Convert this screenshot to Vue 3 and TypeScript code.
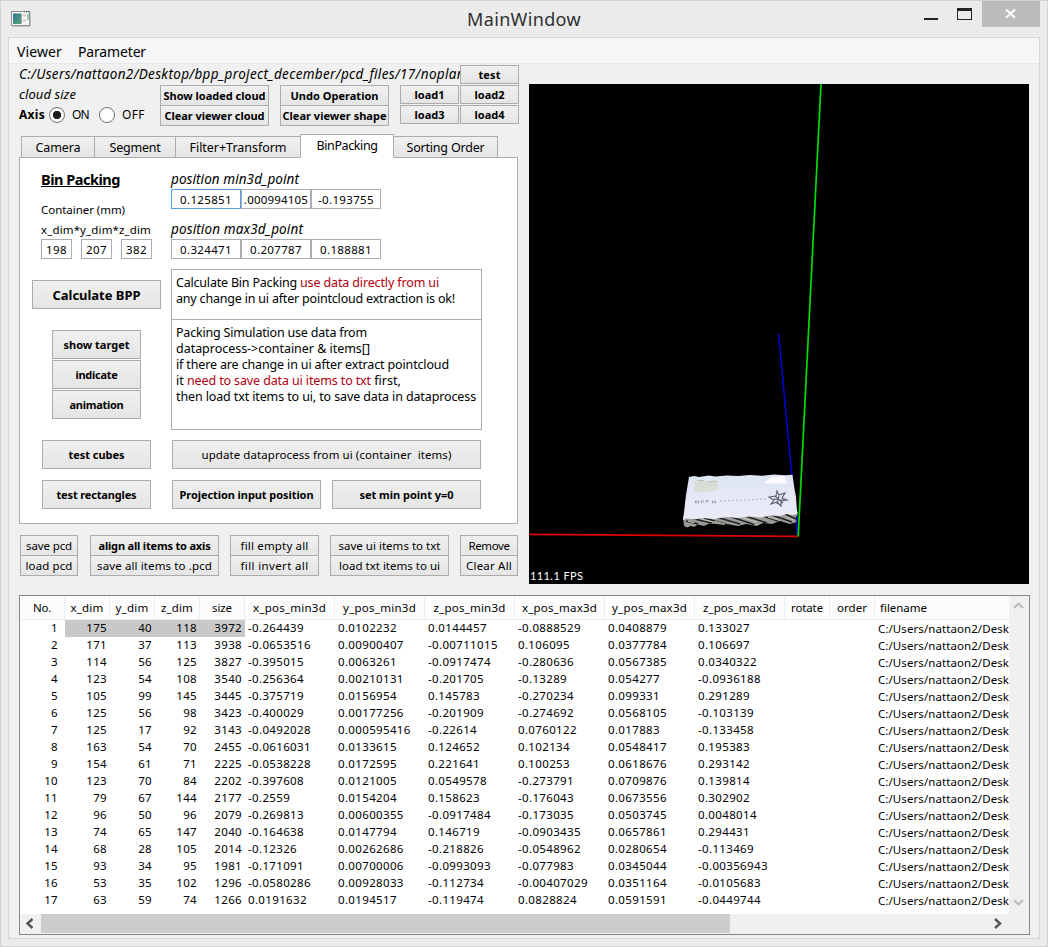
<script setup lang="ts">
import type { Directive } from 'vue'

// Spreads a label's letters so that it occupies the given width in pixels.
const vFit: Directive<HTMLElement, number> = {
  mounted(el, binding) {
    const count = (el.textContent ?? '').length
    const natural = el.getBoundingClientRect().width
    if (count > 0) el.style.letterSpacing = `${(binding.value - natural) / count}px`
  },
}

interface Btn { label: string; w: number; bold?: boolean }

const tabs = [
  { label: 'Camera', size: 'camera', w: 45 },
  { label: 'Segment', size: 'segment', w: 51 },
  { label: 'Filter+Transform', size: 'filter', w: 97 },
  { label: 'BinPacking', size: 'bin', w: 61 },
  { label: 'Sorting Order', size: 'sorting', w: 78 },
]

const updateLabel = 'update dataprocess from ui (container  items)'

const itemButtons: { size: string; items: Btn[] }[] = [
  { size: 'g1', items: [{ label: 'save pcd', w: 46 }, { label: 'load pcd', w: 47 }] },
  { size: 'g2', items: [{ label: 'align all items to axis', w: 112, bold: true }, { label: 'save all items to .pcd', w: 115 }] },
  { size: 'g3', items: [{ label: 'fill empty all', w: 68 }, { label: 'fill invert all', w: 68 }] },
  { size: 'g4', items: [{ label: 'save ui items to txt', w: 102 }, { label: 'load txt items to ui', w: 101 }] },
  { size: 'g5', items: [{ label: 'Remove', w: 41 }, { label: 'Clear All', w: 46 }] },
]

const columns = [
  { label: 'No.', w: 18 }, { label: 'x_dim', w: 33 }, { label: 'y_dim', w: 33 }, { label: 'z_dim', w: 32 },
  { label: 'size', w: 20 }, { label: 'x_pos_min3d', w: 73 }, { label: 'y_pos_min3d', w: 73 },
  { label: 'z_pos_min3d', w: 72 }, { label: 'x_pos_max3d', w: 75 }, { label: 'y_pos_max3d', w: 75 },
  { label: 'z_pos_max3d', w: 73 }, { label: 'rotate', w: 32 }, { label: 'order', w: 30 }, { label: 'filename', w: 47 },
]

const rows: string[][] = [
  '175 40 118 3972 -0.264439 0.0102232 0.0144457 -0.0888529 0.0408879 0.133027',
  '171 37 113 3938 -0.0653516 0.00900407 -0.00711015 0.106095 0.0377784 0.106697',
  '114 56 125 3827 -0.395015 0.0063261 -0.0917474 -0.280636 0.0567385 0.0340322',
  '123 54 108 3540 -0.256364 0.00210131 -0.201705 -0.13289 0.054277 -0.0936188',
  '105 99 145 3445 -0.375719 0.0156954 0.145783 -0.270234 0.099331 0.291289',
  '125 56 98 3423 -0.400029 0.00177256 -0.201909 -0.274692 0.0568105 -0.103139',
  '125 17 92 3143 -0.0492028 0.000595416 -0.22614 0.0760122 0.017883 -0.133458',
  '163 54 70 2455 -0.0616031 0.0133615 0.124652 0.102134 0.0548417 0.195383',
  '154 61 71 2225 -0.0538228 0.0172595 0.221641 0.100253 0.0618676 0.293142',
  '123 70 84 2202 -0.397608 0.0121005 0.0549578 -0.273791 0.0709876 0.139814',
  '79 67 144 2177 -0.2559 0.0154204 0.158623 -0.176043 0.0673556 0.302902',
  '96 50 96 2079 -0.269813 0.00600355 -0.0917484 -0.173035 0.0503745 0.0048014',
  '74 65 147 2040 -0.164638 0.0147794 0.146719 -0.0903435 0.0657861 0.294431',
  '68 28 105 2014 -0.12326 0.00262686 -0.218826 -0.0548962 0.0280654 -0.113469',
  '93 34 95 1981 -0.171091 0.00700006 -0.0993093 -0.077983 0.0345044 -0.00356943',
  '53 35 102 1296 -0.0580286 0.00928033 -0.112734 -0.00407029 0.0351164 -0.0105683',
  '63 59 74 1266 0.0191632 0.0194517 -0.119474 0.0828824 0.0591591 -0.0449744',
].map((line) => line.split(' '))
</script>

<template>
  <div class="window">
    <header class="titlebar">
      <svg class="app-icon" width="20" height="16" viewBox="0 0 20 16">
        <defs>
          <linearGradient id="ico" x1="0" y1="0" x2="1" y2="1">
            <stop offset="0" stop-color="#39709a" /><stop offset="1" stop-color="#4fa871" />
          </linearGradient>
        </defs>
        <rect x=".5" y=".5" width="18" height="14" fill="#f5f5f5" stroke="#8d9194" />
        <path d="M1 15h18V1" fill="none" stroke="#999" />
        <rect x="2" y="2.5" width="8" height="10.5" fill="url(#ico)" />
        <path d="M10.5 2.5V13" stroke="#a5adb5" />
        <path d="M12 4.5h3M12 9.5h3" stroke="#c9c9c9" stroke-width="2" />
        <path d="M17 3v6" stroke="#4d9b83" />
        <path d="M13 .8h5" stroke="#3f5b7a" stroke-dasharray="1 1" />
      </svg>
      <h1 class="title"><span v-fit="114">MainWindow</span></h1>
      <svg class="controls" width="116" height="26" viewBox="0 0 116 26">
        <rect x="58" y="0" width="58" height="26" fill="#bcbcbc" />
        <rect x="0" y="17" width="14" height="2" fill="#222" />
        <path d="M33 7h15v12H33zM34 10v8h13v-8z" fill="#222" fill-rule="evenodd" />
        <path d="M82 8.5l9 8.2M91 8.5l-9 8.2" stroke="#fff" stroke-width="2" />
      </svg>
    </header>

    <div class="client">
      <nav class="menubar">
        <span class="menu-viewer"><span v-fit="45">Viewer</span></span>
        <span><span v-fit="68">Parameter</span></span>
      </nav>

      <main class="upper">
        <section class="left">
          <div class="path-row">
            <div class="path"><span v-fit="446">C:/Users/nattaon2/Desktop/bpp_project_december/pcd_files/17/noplan</span></div>
            <button class="btn small bold"><span v-fit="22">test</span></button>
          </div>
          <div class="tools">
            <div class="status">
              <div class="cloud"><span v-fit="57">cloud size</span></div>
              <div class="axis">
                <b><span v-fit="26">Axis</span></b>
                <i class="radio on"></i><span class="opt"><span v-fit="17">ON</span></span>
                <i class="radio"></i><span class="opt"><span v-fit="23">OFF</span></span>
              </div>
            </div>
            <div class="pair">
              <button class="btn bold"><span v-fit="102">Show loaded cloud</span></button>
              <button class="btn bold"><span v-fit="100">Clear viewer cloud</span></button>
            </div>
            <div class="pair">
              <button class="btn bold"><span v-fit="88">Undo Operation</span></button>
              <button class="btn bold"><span v-fit="104">Clear viewer shape</span></button>
            </div>
            <div class="loads">
              <button v-for="n in 4" :key="n" class="btn small bold"><span v-fit="30">load{{ n }}</span></button>
            </div>
          </div>

          <div class="tabs">
            <div v-for="t in tabs" :key="t.label" class="tab" :class="t.size"><span v-fit="t.w">{{ t.label }}</span></div>
          </div>
          <div class="panel">
            <div class="col-a">
              <h2 class="heading"><span v-fit="79">Bin Packing</span></h2>
              <div class="label"><span v-fit="84">Container (mm)</span></div>
              <div class="label"><span v-fit="110">x_dim*y_dim*z_dim</span></div>
              <div class="dims">
                <div class="field">198</div><div class="field">207</div><div class="field">382</div>
              </div>
              <button class="btn calc bold"><span v-fit="88">Calculate BPP</span></button>
              <div class="stack">
                <button class="btn bold"><span v-fit="66">show target</span></button>
                <button class="btn bold"><span v-fit="42">indicate</span></button>
                <button class="btn bold"><span v-fit="54">animation</span></button>
              </div>
              <div class="tests">
                <button class="btn bold"><span v-fit="56">test cubes</span></button>
                <button class="btn bold"><span v-fit="80">test rectangles</span></button>
              </div>
            </div>
            <div class="col-b">
              <div class="pos"><span v-fit="128">position min3d_point</span></div>
              <div class="points">
                <div class="field focus">0.125851</div>
                <div class="field tight">.000994105</div>
                <div class="field">-0.193755</div>
              </div>
              <div class="pos second"><span v-fit="132">position max3d_point</span></div>
              <div class="points">
                <div class="field">0.324471</div><div class="field">0.207787</div><div class="field">0.188881</div>
              </div>
              <div class="note first">
                <p><span v-fit="124">Calculate Bin Packing </span><em v-fit="139">use data directly from ui</em></p>
                <p><span v-fit="279">any change in ui after pointcloud extraction is ok!</span></p>
              </div>
              <div class="note">
                <p><span v-fit="191">Packing Simulation use data from</span></p>
                <p><span v-fit="194">dataprocess-&gt;container &amp; items[]</span></p>
                <p><span v-fit="273">if there are change in ui after extract pointcloud</span></p>
                <p><span v-fit="11">it </span><em v-fit="184">need to save data ui items to txt</em><span v-fit="30"> first,</span></p>
                <p><span v-fit="300">then load txt items to ui, to save data in dataprocess</span></p>
              </div>
              <button class="btn update"><span v-fit="250">{{ updateLabel }}</span></button>
              <div class="duo">
                <button class="btn bold"><span v-fit="134">Projection input position</span></button>
                <button class="btn bold"><span v-fit="94">set min point y=0</span></button>
              </div>
            </div>
          </div>

          <div class="item-buttons">
            <div v-for="g in itemButtons" :key="g.size" class="pair" :class="g.size">
              <button v-for="b in g.items" :key="b.label" class="btn" :class="{ bold: b.bold }"><span v-fit="b.w">{{ b.label }}</span></button>
            </div>
          </div>
        </section>

        <svg class="viewer" width="500" height="500" viewBox="529 84 500 500">
          <defs>
            <linearGradient id="paper" x1="0" y1="0" x2="0" y2="1">
              <stop offset="0" stop-color="#dfe5f3" /><stop offset="1" stop-color="#ebebf8" />
            </linearGradient>
          </defs>
          <rect x="529" y="84" width="500" height="500" fill="#000" />
          <path d="M778.5 334L797.5 535" stroke="#0000d0" stroke-width="1.6" />
          <path d="M683 516L684 526 687 527.500 691 526 694 527 698 524.500 704 526 709 523.500 716 524 724 525 727 524 738 526 746 524 757 526 763 523 772 524 780 521 790 524 797 522 797.500 512z" fill="#9a9b96" />
          <path d="M686 521l12 3M690 518l22 5M704 518l22 6M716 517l24 7M730 516.500l24 8M745 516l22 7M760 515l18 6M772 515l20 7M784 513.500l13 6" stroke="#20221f" stroke-width="1.5" />
          <path d="M688 521l6 2M701 519l12 3M714 521l11 3M742 518l15 4M768 517l10 3M786 517l8 3" stroke="#c8c7be" stroke-width="1" />
          <path d="M689 477L694 476 699 477 709 475.500 715 476.500 727 475.500 738 476 750 475 762 475.800 774 474.500 785 475.300 792.500 474.800 793.500 482 794.500 489 796 497 796.500 505 797.500 514 792 515 787 514 780 516 770 515.500 761 517.500 750 516.500 738 518 726 517 714 519 703 518 694 519.500 687 518.500 683 520 684.500 508 686 495z" fill="url(#paper)" />
          <path d="M695 481.500l23-.8.500 9-16 2.500-9-1z" fill="#d3dccf" opacity=".85" />
          <path d="M763 483l9-6 14-1-1 3 3 4-12 1z" fill="#fafaff" />
          <path d="M697 480.500h7M708 482l8-1" stroke="#c2c1aa" stroke-width="1" />
          <path d="M695 502h4M701 502l3-1M706 501h3M712 502h4" stroke="#9a9ca8" stroke-width="2.4" stroke-dasharray="1.5 1" />
          <path d="M720 501l47-2" stroke="#babcc8" stroke-width="1.2" stroke-dasharray="2 2" />
          <path d="M777 491l2 4 6-2-3 5 5 2-6 1 0 5-4-4-6 2 3-4-5-3 7-1zM774 499l10 1M779 496l-2 8M775 496l8 7" fill="none" stroke="#5a5e69" stroke-width="1.100" />
          <path d="M796.700 516L797.500 535" stroke="#0000b8" stroke-width="1.4" />
          <path d="M529 534.300L798 536.400" stroke="#df0000" stroke-width="1.7" />
          <path d="M821 84L798.200 536.500" stroke="#00dc00" stroke-width="1.7" />
          <text x="530" y="580" class="fps" textLength="53">111.1 FPS</text>
        </svg>
      </main>

      <section class="table">
        <div class="table-body">
          <div class="grid head">
            <div v-for="c in columns" :key="c.label" class="th"><span v-fit="c.w">{{ c.label }}</span></div>
          </div>
          <div v-for="(row, i) in rows" :key="i" class="grid tr" :class="{ selected: i === 0 }">
            <div class="td no">{{ i + 1 }}</div>
            <div v-for="(cell, j) in row" :key="j" class="td" :class="{ int: j < 4 }">{{ cell }}</div>
            <div class="td"></div>
            <div class="td"></div>
            <div class="td file"><span v-fit="131">C:/Users/nattaon2/Desk</span></div>
          </div>
        </div>
        <div class="vbar">
          <svg width="19" height="318" viewBox="0 0 19 318">
            <path d="M5 12l4.500-4.500L14 12" fill="none" stroke="#bdbdbd" stroke-width="2.2" />
            <path d="M5 304l4.500 4.500L14 304" fill="none" stroke="#bdbdbd" stroke-width="2.2" />
          </svg>
        </div>
        <div class="hbar">
          <svg width="21" height="19" viewBox="0 0 21 19"><path d="M12.500 5l-5 4.500 5 4.500" fill="none" stroke="#555" stroke-width="2.4" /></svg>
          <div class="thumb"></div>
          <svg class="right-arrow" width="21" height="19" viewBox="0 0 21 19"><path d="M7 5l5 4.500-5 4.500" fill="none" stroke="#555" stroke-width="2.4" /></svg>
        </div>
      </section>
    </div>
  </div>
</template>

<style>
body { margin: 0; background: #ebebeb; }
</style>

<style scoped>
* { box-sizing: border-box; }
.window { width: 1048px; height: 947px; overflow: hidden; border: 1px solid #d2d2d2; background: #ebebeb; font: 11.5px/20px "Noto Sans", "Open Sans", sans-serif; color: #000; }
span, b, em { white-space: pre; }
em { font-style: normal; color: #b0000f; }
.titlebar { height: 36px; display: flex; align-items: flex-start; }
.app-icon { margin: 10px 0 0 10px; flex: none; }
.title { margin: 0; flex: 1; padding-left: 436px; font-size: 18px; font-weight: 400; line-height: 37px; color: #303030; }
.controls { flex: none; margin-right: 7px; }
.client { width: 1032px; height: 902px; margin-left: 7px; border: 1px solid #d6d8da; background: #f0f0f0; }
.menubar { height: 26px; display: flex; gap: 16px; padding-left: 8px; background: #f5f6f8; border-bottom: 1px solid #e6e7e9; font-size: 14px; line-height: 27px; }
.upper { display: flex; height: 531px; }
.left { width: 500px; margin-left: 10px; padding-top: 1px; flex: none; }
.btn { display: flex; align-items: center; justify-content: center; margin: 0; padding: 0; height: 29px; border: 1px solid #acacac; background: linear-gradient(#f0f0f0, #e5e5e5); font: inherit; line-height: 18px; color: #000; overflow: hidden; }
.bold { font-weight: 700; font-size: 11px; }
.small { width: 59px; height: 19px; }
.path-row { display: flex; height: 20px; }
.path { width: 441px; overflow: hidden; font-size: 13.5px; font-style: italic; line-height: 18px; }
.tools { display: flex; height: 49px; }
.status { width: 141px; }
.cloud { font-size: 13px; font-style: italic; line-height: 19px; height: 20px; }
.axis { display: flex; align-items: center; height: 19px; font-size: 12px; }
.axis b { width: 30px; flex: none; }
.radio { width: 16px; height: 16px; border: 1px solid #707070; border-radius: 50%; background: #fff; flex: none; }
.radio.on { background: radial-gradient(circle, #1c1c1c 0 3.8px, #fff 4.5px); }
.opt { width: 34px; padding-left: 7px; flex: none; }
.pair { width: 109px; margin-right: 11px; flex: none; }
.pair .btn { width: 100%; height: 21px; }
.pair .btn + .btn { margin-top: -1px; }
.loads { display: grid; grid-template-columns: 59px 59px; gap: 1px; align-content: start; }
.tabs { display: flex; align-items: flex-end; height: 24px; padding-left: 2px; font-size: 12.5px; }
.tab { height: 22px; border: 1px solid #acacac; background: linear-gradient(#f0f0f0, #e5e5e5); text-align: center; line-height: 21px; margin-right: -1px; flex: none; }
.camera { width: 74px; }
.segment { width: 82px; }
.filter { width: 126px; }
.bin { width: 94px; height: 24px; background: #fff; border-bottom-color: #fff; position: relative; }
.sorting { width: 105px; }
.panel { display: flex; width: 499px; height: 367px; margin-top: -1px; border: 1px solid #acacac; background: #fff; }
.col-a { width: 151px; padding: 12px 0 0 21px; flex: none; }
.heading { margin: 0 0 10px; font-size: 14.5px; line-height: 19px; height: 20px; text-decoration: underline; }
.label { height: 20px; line-height: 20px; }
.dims { display: flex; gap: 9px; margin-top: -1px; }
.field { height: 20px; border: 1px solid #abadb3; background: #fff; text-align: center; line-height: 19px; letter-spacing: .35px; white-space: nowrap; }
.dims .field { width: 31px; }
.calc { width: 129px; margin: 21px 0 0 -9px; font-size: 13px; }
.stack { margin: 21px 0 0 11px; display: grid; gap: 1px; }
.stack .btn { width: 89px; }
.tests { margin: 21px 0 0 1px; display: grid; gap: 11px; }
.tests .btn { width: 109px; }
.col-b { width: 311px; padding-top: 12px; flex: none; }
.pos { height: 20px; margin-bottom: -1px; font-size: 13.5px; font-style: italic; line-height: 18px; }
.second { margin-top: 11px; }
.points { display: flex; }
.points .field { width: 70px; }
.points .field.focus { border-color: #569de5; }
.field.tight { letter-spacing: .2px; }
.note { height: 111px; padding: 5px 0 0 4px; border: 1px solid #abadb3; font-size: 12.5px; line-height: 16px; }
.note.first { height: 51px; margin: 10px 0 -1px; }
.note p { margin: 0; height: 16px; white-space: nowrap; }
.update { width: 309px; margin: 10px 0 0 1px; }
.duo { display: flex; justify-content: space-between; margin: 11px 0 0 1px; width: 309px; }
.duo .btn { width: 149px; }
.item-buttons { display: flex; margin-top: 11px; padding-left: 1px; }
.pair.g1 { width: 58px; margin-right: 12px; }
.pair.g2 { width: 129px; }
.pair.g3 { width: 89px; }
.pair.g4 { width: 119px; }
.pair.g5 { width: 58px; margin-right: 0; }
.viewer { margin: 20px 0 0 10px; flex: none; }
.fps { fill: #fff; font-size: 11px; font-family: Lato, sans-serif; }
.table { display: grid; grid-template: 318px 20px / 989px 20px; width: 1011px; height: 340px; margin-left: 10px; border: 1px solid #828790; background: #f0f0f0; }
.table-body { overflow: hidden; background: #fff; }
.grid { display: grid; grid-template-columns: 45px repeat(4, 45px) repeat(6, 90px) 45px 45px 134px; }
.head { height: 24px; background: #fcfcfc; border-bottom: 1px solid #e5f0fb; }
.th { border-right: 1px solid #e5f0fb; text-align: center; line-height: 24px; }
.th:last-child { border: 0; text-align: left; padding-left: 5px; }
.tr { height: 17px; line-height: 15px; letter-spacing: .35px; }
.td { height: 17px; padding-left: 3px; white-space: nowrap; }
.int { text-align: right; padding-right: 3px; }
.no { text-align: right; padding-right: 7px; }
.selected .int { background: #c8c8c8; }
.file { line-height: 18px; letter-spacing: 0; }
.vbar { background: #f0f0f0; }
.hbar { display: flex; background: #f0f0f0; width: 989px; height: 19px; }
.hbar svg { flex: none; }
.thumb { width: 689px; background: #cdcdcd; }
.right-arrow { margin-left: auto; }
</style>
